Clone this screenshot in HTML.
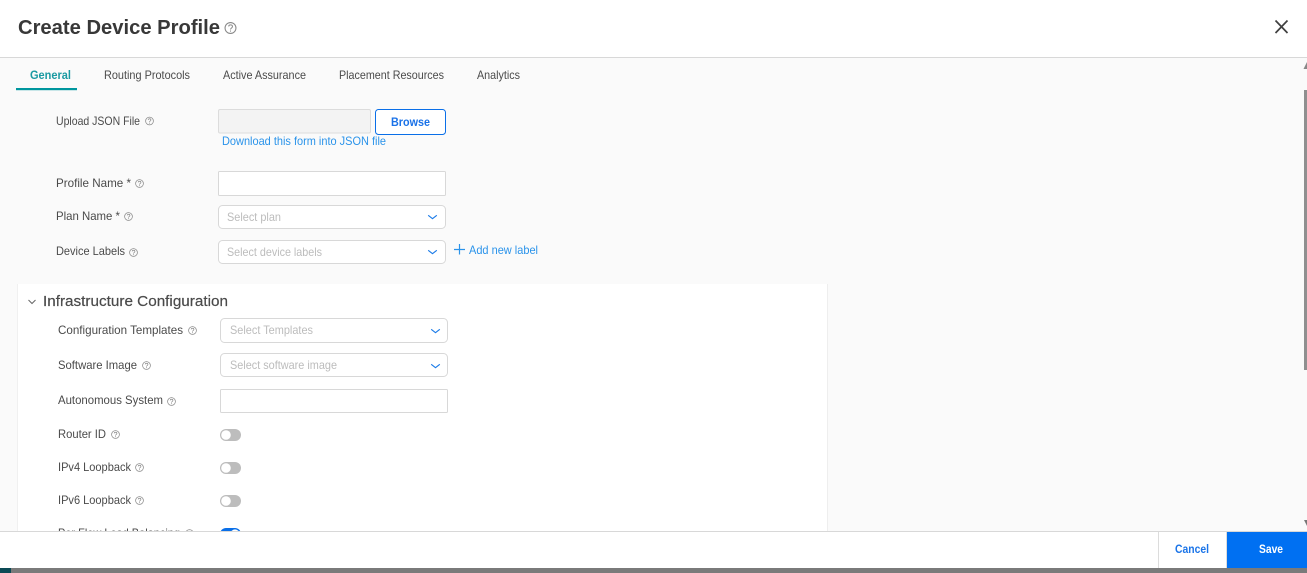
<!DOCTYPE html>
<html><head><meta charset="utf-8"><title>Create Device Profile</title>
<style>
html,body{margin:0;padding:0;width:1307px;height:573px;overflow:hidden;background:#fff}
svg{display:block}
text{font-family:"Liberation Sans",sans-serif;font-size:12px;fill:#4a4a4a}
.b{font-weight:bold}
.ph{fill:#bcbcbc}
.lnk{fill:#2a93ea}
.box{fill:#fff;stroke:#d8d8d8;stroke-width:1}
</style></head><body>
<svg width="1307" height="573" viewBox="0 0 1307 573" xmlns="http://www.w3.org/2000/svg">
<defs>
<g id="h"><circle cx="0" cy="0" r="3.9" fill="none" stroke="#8a8a8a" stroke-width=".75"/><path d="M-1.3-1.1C-1.2-2.6 1.4-2.6 1.4-1C1.4 0 0 0 0 1.1M0 1.8V2.6" fill="none" stroke="#8a8a8a" stroke-width=".75"/></g>
<path id="c" d="M-4.300-1.700 0 1.700 4.300-1.700" fill="none" stroke="#1a7ae8" stroke-width="1.150"/>
<g id="t"><rect x="0" y="0" width="21" height="12" rx="6" fill="#bdbdbd"/><circle cx="6" cy="6" r="4.800" fill="#fff"/></g>
<clipPath id="body"><rect x="0" y="58" width="1307" height="473"/></clipPath>
</defs>

<rect width="1307" height="573" fill="#fff"/>
<rect x="0" y="58" width="1307" height="473" fill="#fafafa"/>
<rect x="0" y="57" width="1307" height="1" fill="#d8d8d8"/>

<text x="18" y="34" class="b" style="font-size:20.500px;fill:#383838" lengthAdjust="spacingAndGlyphs" textLength="202">Create Device Profile</text>
<g transform="translate(230.500 28) scale(1.400)"><use href="#h"/></g>
<path d="M1275.500 20.500 1287.500 33M1287.500 20.500 1275.500 33" stroke="#404040" stroke-width="1.700" fill="none"/>

<text x="30" y="79" class="b" style="fill:#1a9aa2" lengthAdjust="spacingAndGlyphs" textLength="41">General</text>
<rect x="16" y="88" width="61" height="2.200" fill="#00969e"/>
<text x="104" y="79" lengthAdjust="spacingAndGlyphs" textLength="86">Routing Protocols</text>
<text x="223" y="79" lengthAdjust="spacingAndGlyphs" textLength="83">Active Assurance</text>
<text x="339" y="79" lengthAdjust="spacingAndGlyphs" textLength="105">Placement Resources</text>
<text x="477" y="79" lengthAdjust="spacingAndGlyphs" textLength="43">Analytics</text>

<g clip-path="url(#body)">
<text x="56" y="125" lengthAdjust="spacingAndGlyphs" textLength="84">Upload JSON File</text><use href="#h" x="149.500" y="121"/>
<rect x="218.500" y="109.500" width="152" height="23.500" rx="1.500" fill="#f3f3f3" stroke="#dcdcdc"/>
<rect x="375.500" y="109.500" width="70" height="25" rx="3" fill="#fff" stroke="#0a6fe8" stroke-width="1"/>
<text x="391" y="126" class="b" style="fill:#1a72e8" lengthAdjust="spacingAndGlyphs" textLength="39">Browse</text>
<text x="222" y="145" class="lnk" lengthAdjust="spacingAndGlyphs" textLength="164">Download this form into JSON file</text>

<text x="56" y="187" lengthAdjust="spacingAndGlyphs" textLength="75">Profile Name *</text><use href="#h" x="139.500" y="183.500"/>
<rect class="box" x="218.500" y="171.500" width="227" height="24" rx="1"/>
<text x="56" y="220" lengthAdjust="spacingAndGlyphs" textLength="64">Plan Name *</text><use href="#h" x="128.500" y="216.500"/>
<rect class="box" x="218.500" y="205.500" width="227" height="23" rx="4"/>
<text x="227" y="221" class="ph" lengthAdjust="spacingAndGlyphs" textLength="54">Select plan</text><use href="#c" x="432.500" y="217"/>
<text x="56" y="255" lengthAdjust="spacingAndGlyphs" textLength="69">Device Labels</text><use href="#h" x="133.500" y="252.500"/>
<rect class="box" x="218.500" y="240.500" width="227" height="23" rx="4"/>
<text x="227" y="256" class="ph" lengthAdjust="spacingAndGlyphs" textLength="95">Select device labels</text><use href="#c" x="432.500" y="252"/>
<path d="M459.500 244V254.500M454 249.500H465" stroke="#2a93ea" stroke-width="1.200" fill="none"/>
<text x="469" y="254" class="lnk" lengthAdjust="spacingAndGlyphs" textLength="69">Add new label</text>

<rect x="18" y="284" width="809" height="260" fill="#fff"/>
<rect x="17" y="284" width="1" height="250" fill="#f0f0f0"/>
<rect x="827" y="284" width="1" height="250" fill="#eeeeee"/>
<path d="M28.500 300 32 303.500 35.500 300" fill="none" stroke="#666" stroke-width="1"/>
<text x="43" y="306" style="font-size:15px;stroke:#4a4a4a;stroke-width:.2" lengthAdjust="spacingAndGlyphs" textLength="185">Infrastructure Configuration</text>

<text x="58" y="334" lengthAdjust="spacingAndGlyphs" textLength="125">Configuration Templates</text><use href="#h" x="192.500" y="330.500"/>
<rect class="box" x="220.500" y="318.500" width="227" height="24" rx="4"/>
<text x="230" y="334" class="ph" lengthAdjust="spacingAndGlyphs" textLength="83">Select Templates</text><use href="#c" x="435.500" y="331"/>
<text x="58" y="369" lengthAdjust="spacingAndGlyphs" textLength="79">Software Image</text><use href="#h" x="146.500" y="365.500"/>
<rect class="box" x="220.500" y="353.500" width="227" height="23" rx="4"/>
<text x="230" y="369" class="ph" lengthAdjust="spacingAndGlyphs" textLength="107">Select software image</text><use href="#c" x="435.500" y="366"/>
<text x="58" y="404" lengthAdjust="spacingAndGlyphs" textLength="105">Autonomous System</text><use href="#h" x="171.500" y="401.500"/>
<rect class="box" x="220.500" y="389.500" width="227" height="23" rx="1"/>
<text x="58" y="438" lengthAdjust="spacingAndGlyphs" textLength="48">Router ID</text><use href="#h" x="115.500" y="434.500"/>
<use href="#t" x="220" y="429"/>
<text x="58" y="471" lengthAdjust="spacingAndGlyphs" textLength="73">IPv4 Loopback</text><use href="#h" x="139.500" y="467.500"/>
<use href="#t" x="220" y="462"/>
<text x="58" y="504" lengthAdjust="spacingAndGlyphs" textLength="73">IPv6 Loopback</text><use href="#h" x="139.500" y="500.500"/>
<use href="#t" x="220" y="495"/>
<text x="58" y="537" lengthAdjust="spacingAndGlyphs" textLength="122">Per Flow Load Balancing</text><use href="#h" x="189.500" y="533.500"/>
<rect x="220" y="528" width="21" height="12" rx="6" fill="#0a6fe8"/><circle cx="235" cy="534" r="4.600" fill="#fff"/>

<path d="M1303.500 69 1307 62V69Z" fill="#888"/>
<rect x="1304" y="90" width="3" height="280" fill="#8f8f8f"/>
<path d="M1304 520H1307V526Z" fill="#777"/>
</g>

<rect x="0" y="531" width="1307" height="1" fill="#d8d8d8"/>
<rect x="0" y="532" width="1307" height="36" fill="#fff"/>
<rect x="1158" y="532" width="1" height="36" fill="#dcdcdc"/>
<rect x="1226" y="532" width="1" height="36" fill="#dcdcdc"/>
<rect x="1227" y="532" width="80" height="36" fill="#0070f2"/>
<text x="1175" y="553" class="b" style="fill:#1a74e8" lengthAdjust="spacingAndGlyphs" textLength="34">Cancel</text>
<text x="1259" y="553" class="b" style="fill:#fff" lengthAdjust="spacingAndGlyphs" textLength="24">Save</text>
<rect x="0" y="568" width="1307" height="5" fill="#7a7a7a"/>
<rect x="0" y="568" width="11" height="5" fill="#0c4a55"/>
</svg>
</body></html>
